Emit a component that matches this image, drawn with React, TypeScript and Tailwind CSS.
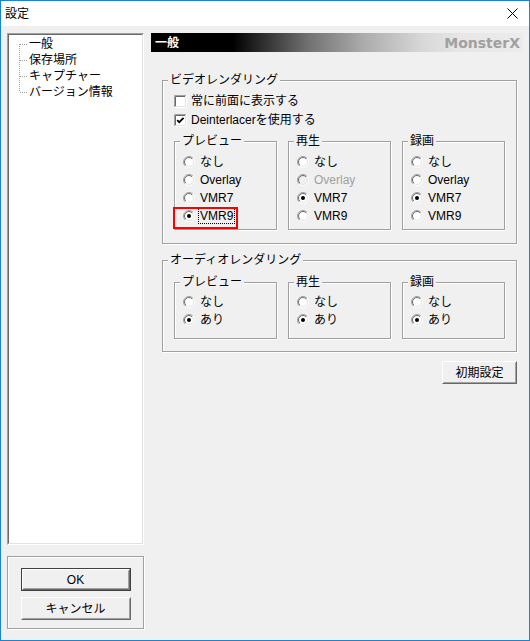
import React, { useId } from "react";

const JP = "font-['Liberation_Sans','Noto_Sans_CJK_JP',sans-serif]";
const LAT = "font-['Liberation_Sans_Narrow','Liberation_Sans',sans-serif]";

function Radio({ checked, disabled }: { checked?: boolean; disabled?: boolean }) {
  const id = useId().replace(/[^a-zA-Z0-9]/g, "");
  return (
    <svg width="12" height="12" viewBox="0 0 12 12" className="shrink-0">
      <defs>
        <linearGradient id={`o${id}`} x1="0" y1="0" x2="1" y2="1">
          <stop offset="0.5" stopColor="#a0a0a0" />
          <stop offset="0.5" stopColor="#ffffff" />
        </linearGradient>
        <linearGradient id={`i${id}`} x1="0" y1="0" x2="1" y2="1">
          <stop offset="0.5" stopColor="#696969" />
          <stop offset="0.5" stopColor="#e3e3e3" />
        </linearGradient>
      </defs>
      <circle cx="6" cy="6" r="5.5" fill="none" stroke={`url(#o${id})`} />
      <circle cx="6" cy="6" r="4.5" fill={disabled ? "#f0f0f0" : "#ffffff"} stroke={`url(#i${id})`} />
      {checked && <circle cx="6" cy="6" r="2" fill={disabled ? "#a0a0a0" : "#000000"} />}
    </svg>
  );
}

function Check({ checked }: { checked?: boolean }) {
  return (
    <svg width="13" height="13" viewBox="0 0 13 13" className="shrink-0">
      <path d="M0.5 12.5 V0.5 H12.5" fill="none" stroke="#a0a0a0" />
      <path d="M1.5 11.5 V1.5 H11.5" fill="none" stroke="#696969" />
      <path d="M0 12.5 H12.5 V0" fill="none" stroke="#ffffff" />
      <path d="M1 11.5 H11.5 V1" fill="none" stroke="#e3e3e3" />
      <rect x="2" y="2" width="9" height="9" fill="#ffffff" />
      {checked && (
        <path d="M3.2 6.2 L5.2 8.2 L9.6 3.8" fill="none" stroke="#000" strokeWidth="1.8" />
      )}
    </svg>
  );
}

function Group({
  title,
  className = "",
  children,
}: {
  title: string;
  className?: string;
  children: React.ReactNode;
}) {
  return (
    <fieldset
      className={`border border-[#a0a0a0] shadow-[inset_1px_1px_0_#ffffff,1px_1px_0_#ffffff] ${className}`}
    >
      <legend className="ml-[5px] px-[2px] bg-[#f0f0f0] text-[12px] leading-[14px]">{title}</legend>
      {children}
    </fieldset>
  );
}

function Btn({
  children,
  def,
  className = "",
}: {
  children: React.ReactNode;
  def?: boolean;
  className?: string;
}) {
  const inner = (
    <div className="h-full border border-t-[#ffffff] border-l-[#ffffff] border-r-[#696969] border-b-[#696969]">
      <div className="h-full border border-t-[#f0f0f0] border-l-[#f0f0f0] border-r-[#a0a0a0] border-b-[#a0a0a0] bg-[#f0f0f0] flex items-center justify-center text-[12px] leading-[14px]">
        {children}
      </div>
    </div>
  );
  return def ? (
    <div className={`border border-[#404040] ${className}`}>{inner}</div>
  ) : (
    <div className={className}>{inner}</div>
  );
}

type Opt = { label: string; latin?: boolean; checked?: boolean; disabled?: boolean; mark?: boolean };

function RadioRow({ o }: { o: Opt }) {
  return (
    <div className="relative flex items-center h-[18px]">
      <Radio checked={o.checked} disabled={o.disabled} />
      {o.mark ? (
        <span
          className={`ml-[3px] border border-dotted border-black px-[1px] leading-[14px] ${o.latin ? LAT : ""}`}
        >
          {o.label}
        </span>
      ) : (
        <span
          className={`ml-[5px] leading-[14px] ${o.latin ? LAT : ""} ${o.disabled ? "text-[#a0a0a0]" : ""}`}
        >
          {o.label}
        </span>
      )}
      {o.mark && (
        <div className="absolute left-[-10px] top-0 w-[65px] h-[22px] border-2 border-[#ff0000]" />
      )}
    </div>
  );
}

function SubGroup({ title, opts, pt, pb }: { title: string; opts: Opt[]; pt: string; pb: string }) {
  return (
    <Group title={title} className="w-[103px]">
      <div className={`pl-[8px] ${pt} ${pb}`}>
        {opts.map((o, i) => (
          <RadioRow key={i} o={o} />
        ))}
      </div>
    </Group>
  );
}

function TreeRow({ label, pos }: { label: string; pos: "first" | "mid" | "last" }) {
  return (
    <div className="flex items-center h-[16px]">
      <svg width="20" height="16" viewBox="0 0 20 16" className="shrink-0">
        <line
          x1="10.5"
          x2="10.5"
          y1={pos === "first" ? 8 : 0}
          y2={pos === "last" ? 8 : 16}
          stroke="#a0a0a0"
          strokeDasharray="1 1"
        />
        <line x1="11" x2="19" y1="8.5" y2="8.5" stroke="#a0a0a0" strokeDasharray="1 1" />
      </svg>
      <span className="leading-[14px]">{label}</span>
    </div>
  );
}

export default function App() {
  const vPreview: Opt[] = [
    { label: "なし" },
    { label: "Overlay", latin: true },
    { label: "VMR7", latin: true },
    { label: "VMR9", latin: true, checked: true, mark: true },
  ];
  const vPlay: Opt[] = [
    { label: "なし" },
    { label: "Overlay", latin: true, disabled: true },
    { label: "VMR7", latin: true, checked: true },
    { label: "VMR9", latin: true },
  ];
  const vRec: Opt[] = [
    { label: "なし" },
    { label: "Overlay", latin: true },
    { label: "VMR7", latin: true, checked: true },
    { label: "VMR9", latin: true },
  ];
  const aud: Opt[] = [{ label: "なし" }, { label: "あり", checked: true }];

  return (
    <div
      className={`w-[530px] h-[641px] border border-[#1883d7] bg-[#f0f0f0] flex flex-col ${JP} text-[12px] text-black`}
    >
      <div className="h-[25px] bg-white flex items-center justify-between pl-[4px] pr-[11px] shrink-0">
        <span className="leading-[14px]">設定</span>
        <svg width="11" height="11" viewBox="0 0 11 11">
          <line x1="0.5" y1="0.5" x2="10.5" y2="10.5" stroke="#000" strokeWidth="1" />
          <line x1="10.5" y1="0.5" x2="0.5" y2="10.5" stroke="#000" strokeWidth="1" />
        </svg>
      </div>

      <div className="flex pl-[6px] pt-[7px] gap-[7px]">
        {/* left column */}
        <div className="w-[137px] flex flex-col shrink-0">
          <div className="h-[512px] border border-t-[#a0a0a0] border-l-[#a0a0a0] border-r-[#ffffff] border-b-[#ffffff]">
            <div className="h-full border border-t-[#696969] border-l-[#696969] border-r-[#e3e3e3] border-b-[#e3e3e3] bg-white pt-[1px]">
              <TreeRow label="一般" pos="first" />
              <TreeRow label="保存場所" pos="mid" />
              <TreeRow label="キャプチャー" pos="mid" />
              <TreeRow label="バージョン情報" pos="last" />
            </div>
          </div>
          <div className="mt-[11px] h-[73px] border border-[#a0a0a0] shadow-[inset_1px_1px_0_#ffffff,1px_1px_0_#ffffff] flex flex-col items-center pt-[11px] gap-[6px]">
            <Btn def className="w-[110px] h-[23px]">
              <span className={LAT}>OK</span>
            </Btn>
            <Btn className="w-[110px] h-[23px]">キャンセル</Btn>
          </div>
        </div>

        {/* right column */}
        <div className="w-[372px] flex flex-col shrink-0">
          <div className="h-[19px] bg-[linear-gradient(to_right,#000000_0%,#000000_22%,#2e2e2e_30%,#707070_42%,#ababab_57%,#d8d8d8_73%,#e6e6e6_83%,#ececec_100%)] flex items-center justify-between pl-[4px] pr-[3px]">
            <span className="text-white font-bold leading-[14px]">一般</span>
            <span className="font-['DejaVu_Sans',sans-serif] font-bold text-[14px] leading-[16px] text-[#a0a0a0]">
              MonsterX
            </span>
          </div>

          <Group title="ビデオレンダリング" className="ml-[11px] mt-[21px] w-[355px]">
            <div className="px-[11px] pt-[6px] pb-[13px]">
              <div className="flex items-center h-[16px]">
                <Check />
                <span className="ml-[4px] leading-[14px]">常に前面に表示する</span>
              </div>
              <div className="flex items-center h-[16px] mt-[3px]">
                <Check checked />
                <span className="ml-[4px] leading-[14px]">
                  <span className={LAT}>Deinterlacer</span>を使用する
                </span>
              </div>
              <div className="mt-[6px] grid grid-cols-[103px_103px_103px] gap-[11px]">
                <SubGroup title="プレビュー" opts={vPreview} pt="pt-[5px]" pb="pb-[4px]" />
                <SubGroup title="再生" opts={vPlay} pt="pt-[5px]" pb="pb-[4px]" />
                <SubGroup title="録画" opts={vRec} pt="pt-[5px]" pb="pb-[4px]" />
              </div>
            </div>
          </Group>

          <Group title="オーディオレンダリング" className="ml-[11px] mt-[9px] w-[355px]">
            <div className="px-[11px] pt-[8px] pb-[12px]">
              <div className="grid grid-cols-[103px_103px_103px] gap-[11px]">
                <SubGroup title="プレビュー" opts={aud} pt="pt-[4px]" pb="pb-[9px]" />
                <SubGroup title="再生" opts={aud} pt="pt-[4px]" pb="pb-[9px]" />
                <SubGroup title="録画" opts={aud} pt="pt-[4px]" pb="pb-[9px]" />
              </div>
            </div>
          </Group>

          <div className="flex justify-end mt-[9px] pr-[6px]">
            <Btn className="w-[75px] h-[23px]">初期設定</Btn>
          </div>
        </div>
      </div>
    </div>
  );
}
